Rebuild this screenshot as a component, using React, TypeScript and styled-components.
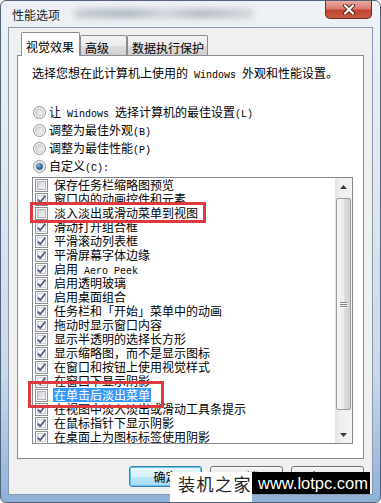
import React from 'react'
import styled, { createGlobalStyle } from 'styled-components'

const GlobalStyle = createGlobalStyle`
  html, body {
    margin: 0;
    padding: 0;
    background: #ffffff;
  }
  body {
    font-family: "Noto Sans CJK SC", "Noto Sans", sans-serif;
    font-size: 12px;
    color: #000;
  }
`

const Window = styled.div`
  position: relative;
  width: 381px;
  height: 503px;
  box-sizing: border-box;
  display: flex;
  flex-direction: column;
  border: 1px solid #50637a;
  border-radius: 6px;
  overflow: hidden;
  background: linear-gradient(180deg, #eef2f6 0%, #e2e8ef 35%, #c9d8ea 75%, #8fb1d8 100%);
`

const TitleBar = styled.div`
  height: 26px;
  display: flex;
  align-items: flex-start;
  padding-left: 11px;
`

const Title = styled.div`
  line-height: 26px;
  margin-top: 1px;
  font-size: 12px;
  color: #1e1e1e;
  white-space: nowrap;
`

const Smudge = styled.div`
  margin: 8px 0 0 14px;
  width: 180px;
  height: 9px;
  border-radius: 5px;
  filter: blur(3px);
  background: linear-gradient(90deg, #b9c0c8 0%, #9ea6af 30%, #c6ccd3 50%, #a2a9b2 70%, #c9ced4 100%);
  opacity: 0.8;
`

const CloseButton = styled.div`
  margin-left: auto;
  margin-right: 8px;
  width: 47px;
  height: 18px;
  box-sizing: border-box;
  border: 1px solid #6b2a22;
  border-top: none;
  border-radius: 0 0 5px 5px;
  background: linear-gradient(180deg, #e9aba2 0%, #d77b6e 45%, #c24331 55%, #c95a42 100%);
  display: flex;
  align-items: center;
  justify-content: center;
`

const Client = styled.div`
  flex: 1;
  margin: 0 7px 7px 7px;
  background: #f0f0f0;
  border: 1px solid #8799ae;
  display: flex;
  flex-direction: column;
  padding: 4px 8px 0 8px;
  min-height: 0;
`

const TabStrip = styled.div`
  display: flex;
  align-items: flex-end;
  height: 24px;
  padding-left: 4px;
  margin-bottom: -1px;
  position: relative;
  z-index: 1;
`

const Tab = styled.div<{ $active?: boolean; $width: number }>`
  box-sizing: border-box;
  width: ${p => p.$width}px;
  height: ${p => (p.$active ? 24 : 20)}px;
  margin-bottom: ${p => (p.$active ? 0 : 1)}px;
  padding: ${p => (p.$active ? 7 : 5)}px 0 0 4px;
  line-height: 14px;
  border: 1px solid #898c95;
  border-bottom: none;
  border-radius: 2px 2px 0 0;
  white-space: nowrap;
  background: ${p =>
    p.$active
      ? '#ffffff'
      : 'linear-gradient(180deg, #f4f4f4 0%, #ebebeb 50%, #dddddd 51%, #d0d0d0 100%)'};
`

const Panel = styled.div`
  flex: 1;
  min-height: 0;
  background: #ffffff;
  border: 1px solid #898c95;
  padding: 10px 10px 14px 14px;
  display: flex;
  flex-direction: column;
`

const Intro = styled.div`
  height: 14px;
  line-height: 14px;
  white-space: nowrap;
`

const Mono = styled.span`
  font-family: "Liberation Mono", "DejaVu Sans Mono", monospace;
  font-size: 10px;
`

const RadioGroup = styled.div`
  margin-top: 23px;
  display: flex;
  flex-direction: column;
`

const RadioRow = styled.div`
  height: 18px;
  display: flex;
  align-items: center;
  gap: 3px;
  padding-left: 1px;
  white-space: nowrap;
`

const RadioLabel = styled.div`
  height: 14px;
  line-height: 14px;
`

const ListBox = styled.div`
  margin-top: 2px;
  flex: 1;
  min-height: 0;
  border: 1px solid #828790;
  display: flex;
`

const Items = styled.div`
  flex: 1;
  display: flex;
  flex-direction: column;
`

const Item = styled.div`
  height: 14px;
  flex-shrink: 0;
  display: flex;
  align-items: center;
  gap: 5px;
  padding-left: 2px;
  white-space: nowrap;
`

const ItemLabel = styled.div<{ $selected?: boolean }>`
  height: 14px;
  line-height: 14px;
  padding: 0 1px;
  background: ${p => (p.$selected ? '#3399ff' : 'transparent')};
  color: ${p => (p.$selected ? '#ffffff' : '#000000')};
`

const ScrollBar = styled.div`
  width: 17px;
  display: flex;
  flex-direction: column;
  background: linear-gradient(90deg, #e2e2e2 0%, #efefef 30%, #f3f3f3 100%);
`

const ArrowButton = styled.div`
  height: 17px;
  display: flex;
  align-items: center;
  justify-content: center;
`

const Track = styled.div`
  flex: 1;
  display: flex;
  flex-direction: column;
  padding: 3px 1px 16px 1px;
`

const Thumb = styled.div`
  flex: 1;
  border: 1px solid #9b9b9b;
  border-radius: 2px;
  background: linear-gradient(90deg, #f6f6f6 0%, #ececec 50%, #dcdcdc 51%, #d2d2d2 100%);
  display: flex;
  flex-direction: column;
  align-items: center;
  justify-content: center;
  gap: 1px;
`

const GripLine = styled.div`
  width: 7px;
  height: 1px;
  background: #7d7d7d;
  box-shadow: 0 1px 0 #fbfbfb;
`

const ButtonRow = styled.div`
  display: flex;
  justify-content: flex-end;
  gap: 8px;
  padding-top: 7px;
  height: 28px;
`

const DialogButton = styled.div<{ $default?: boolean }>`
  box-sizing: border-box;
  width: 73px;
  height: 21px;
  border: 1px solid ${p => (p.$default ? '#3c7fb1' : '#707070')};
  border-radius: 3px;
  display: flex;
  align-items: center;
  justify-content: center;
  line-height: 14px;
  background: ${p =>
    p.$default
      ? 'linear-gradient(180deg, #eaf6fd 0%, #d9f0fc 50%, #bee6fd 51%, #a7d9f5 100%)'
      : 'linear-gradient(180deg, #f2f2f2 0%, #ebebeb 50%, #dddddd 51%, #cfcfcf 100%)'};
  box-shadow: inset 0 0 0 1px ${p => (p.$default ? '#62c6f5' : '#fcfcfc')};
`

const Marker = styled.div<{ $x: number; $y: number; $w: number; $h: number }>`
  position: absolute;
  left: ${p => p.$x}px;
  top: ${p => p.$y}px;
  width: ${p => p.$w}px;
  height: ${p => p.$h}px;
  box-sizing: border-box;
  border: 3px solid #dc3a3c;
  pointer-events: none;
`

const Watermark = styled.div`
  position: absolute;
  left: 169px;
  top: 471px;
  display: flex;
  align-items: flex-start;
`

const WatermarkName = styled.div`
  width: 82px;
  height: 31px;
  background: #ffffff;
  box-sizing: border-box;
  padding: 1px 0 0 8px;
  font-size: 17px;
  line-height: 22px;
  letter-spacing: 1.5px;
  color: #202020;
  white-space: nowrap;
`

const WatermarkUrl = styled.div`
  width: 118px;
  height: 22px;
  background: #000000;
  color: #ffffff;
  font-family: "Liberation Sans", Arial, sans-serif;
  font-size: 16.5px;
  line-height: 22px;
  padding-left: 6px;
  box-sizing: border-box;
  white-space: nowrap;
`

// ascii runs use the narrow half-width face, like SimSun does
const mixed = (s: string) =>
  s.split(/([\x20-\x7e]+)/).map((part, i) =>
    /^[\x20-\x7e]+$/.test(part) ? <Mono key={i}>{part}</Mono> : <React.Fragment key={i}>{part}</React.Fragment>
  )

const CheckBox = ({ checked }: { checked: boolean }) => (
  <svg width="13" height="13" viewBox="0 0 13 13" style={{ flexShrink: 0 }}>
    <defs>
      <linearGradient id="cbIn" x1="0" y1="0" x2="1" y2="1">
        <stop offset="0" stopColor="#cdd0d5" />
        <stop offset="1" stopColor="#f7f7f7" />
      </linearGradient>
    </defs>
    <rect x="0.5" y="0.5" width="12" height="12" fill="#fdfdfd" stroke="#8e8f8f" />
    {checked ? (
      <>
        <rect x="2.5" y="2.5" width="8" height="8" fill="#f6f7f9" stroke="#c9ccd1" />
        <path d="M2.8 6.6 L5.2 9.2 L10.3 2.8" fill="none" stroke="#4b5f86" strokeWidth="1.8" />
      </>
    ) : (
      <rect x="2.5" y="2.5" width="8" height="8" fill="url(#cbIn)" stroke="#b2b6bc" />
    )}
  </svg>
)

const Radio = ({ checked }: { checked?: boolean }) => (
  <svg width="13" height="13" viewBox="0 0 13 13" style={{ flexShrink: 0 }}>
    <defs>
      <linearGradient id="rdIn" x1="0" y1="0" x2="1" y2="1">
        <stop offset="0" stopColor="#cfd2d6" />
        <stop offset="1" stopColor="#f7f7f7" />
      </linearGradient>
      <radialGradient id="rdDot" cx="0.4" cy="0.35" r="0.7">
        <stop offset="0" stopColor="#8fc0e8" />
        <stop offset="0.6" stopColor="#2d6da3" />
        <stop offset="1" stopColor="#1b4870" />
      </radialGradient>
    </defs>
    <circle cx="6.5" cy="6.5" r="6" fill="#fbfbfb" stroke="#8e8f8f" />
    <circle cx="6.5" cy="6.5" r="4" fill="url(#rdIn)" stroke="#b9bcc1" strokeWidth="0.8" />
    {checked && <circle cx="6.5" cy="6.5" r="3.2" fill="url(#rdDot)" />}
  </svg>
)

const items: { label: string; checked: boolean; selected?: boolean }[] = [
  { label: '保存任务栏缩略图预览', checked: false },
  { label: '窗口内的动画控件和元素', checked: true },
  { label: '淡入淡出或滑动菜单到视图', checked: false },
  { label: '滑动打开组合框', checked: true },
  { label: '平滑滚动列表框', checked: true },
  { label: '平滑屏幕字体边缘', checked: true },
  { label: '启用 Aero Peek', checked: true },
  { label: '启用透明玻璃', checked: true },
  { label: '启用桌面组合', checked: true },
  { label: '任务栏和「开始」菜单中的动画', checked: true },
  { label: '拖动时显示窗口内容', checked: true },
  { label: '显示半透明的选择长方形', checked: true },
  { label: '显示缩略图，而不是显示图标', checked: true },
  { label: '在窗口和按钮上使用视觉样式', checked: true },
  { label: '在窗口下显示阴影', checked: true },
  { label: '在单击后淡出菜单', checked: false, selected: true },
  { label: '在视图中淡入淡出或滑动工具条提示', checked: true },
  { label: '在鼠标指针下显示阴影', checked: true },
  { label: '在桌面上为图标标签使用阴影', checked: true },
]

const radios = [
  { label: '让 Windows 选择计算机的最佳设置(L)' },
  { label: '调整为最佳外观(B)' },
  { label: '调整为最佳性能(P)' },
  { label: '自定义(C):', checked: true },
]

export default function App() {
  return (
    <>
      <GlobalStyle />
      <Window>
        <TitleBar>
          <Title>性能选项</Title>
          <Smudge />
          <CloseButton>
            <svg width="14" height="11" viewBox="0 0 14 11">
              <path d="M3 1.5 L11 9.5 M11 1.5 L3 9.5" stroke="#5c1c14" strokeWidth="4" strokeLinecap="round" />
              <path d="M3 1.5 L11 9.5 M11 1.5 L3 9.5" stroke="#ffffff" strokeWidth="2.2" strokeLinecap="round" />
            </svg>
          </CloseButton>
        </TitleBar>
        <Client>
          <TabStrip>
            <Tab $active $width={59}>视觉效果</Tab>
            <Tab $width={47}>高级</Tab>
            <Tab $width={81}>数据执行保护</Tab>
          </TabStrip>
          <Panel>
            <Intro>{mixed('选择您想在此计算机上使用的 Windows 外观和性能设置。')}</Intro>
            <RadioGroup>
              {radios.map(r => (
                <RadioRow key={r.label}>
                  <Radio checked={r.checked} />
                  <RadioLabel>{mixed(r.label)}</RadioLabel>
                </RadioRow>
              ))}
            </RadioGroup>
            <ListBox>
              <Items>
                {items.map(it => (
                  <Item key={it.label}>
                    <CheckBox checked={it.checked} />
                    <ItemLabel $selected={it.selected}>{mixed(it.label)}</ItemLabel>
                  </Item>
                ))}
              </Items>
              <ScrollBar>
                <ArrowButton>
                  <svg width="7" height="4" viewBox="0 0 7 4">
                    <path d="M0 4 L3.5 0 L7 4 Z" fill="#3c3c3c" />
                  </svg>
                </ArrowButton>
                <Track>
                  <Thumb>
                    <GripLine />
                    <GripLine />
                    <GripLine />
                  </Thumb>
                </Track>
                <ArrowButton>
                  <svg width="7" height="4" viewBox="0 0 7 4">
                    <path d="M0 0 L7 0 L3.5 4 Z" fill="#3c3c3c" />
                  </svg>
                </ArrowButton>
              </ScrollBar>
            </ListBox>
          </Panel>
          <ButtonRow>
            <DialogButton $default>确定</DialogButton>
            <DialogButton>取消</DialogButton>
            <DialogButton>应用(A)</DialogButton>
          </ButtonRow>
        </Client>
        <Marker $x={29} $y={201} $w={176} $h={21} />
        <Marker $x={27} $y={380} $w={136} $h={27} />
        <Watermark>
          <WatermarkName>装机之家</WatermarkName>
          <WatermarkUrl>www.lotpc.com</WatermarkUrl>
        </Watermark>
      </Window>
    </>
  )
}
